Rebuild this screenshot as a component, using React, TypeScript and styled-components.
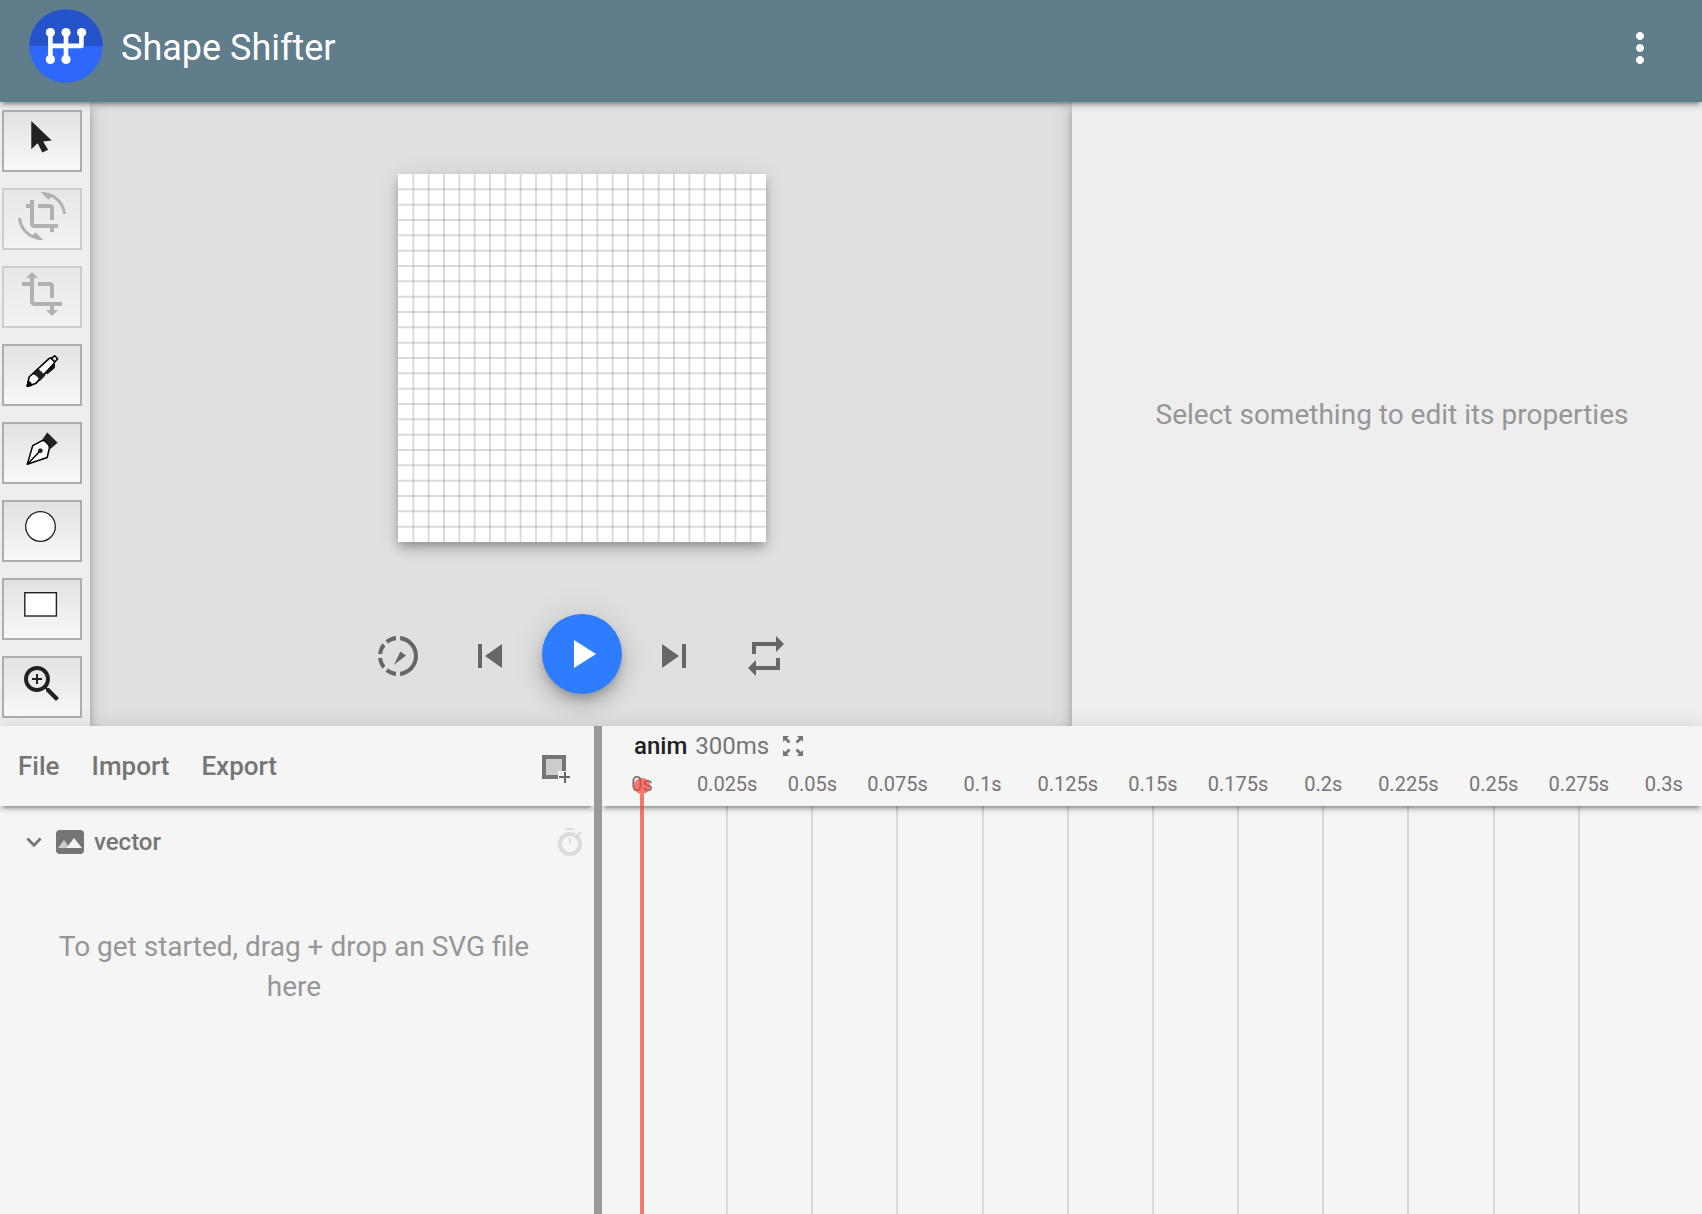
import React from 'react';
import styled, { createGlobalStyle, css } from 'styled-components';

const shadowLow =
  '0 6px 2px -4px rgba(0,0,0,.2), 0 4px 4px rgba(0,0,0,.14), 0 2px 10px rgba(0,0,0,.12)';
const shadowMid =
  '0 4px 8px -2px rgba(0,0,0,.2), 0 8px 10px rgba(0,0,0,.14), 0 2px 20px rgba(0,0,0,.12)';
const shadowHigh =
  '0 6px 10px -2px rgba(0,0,0,.2), 0 12px 20px rgba(0,0,0,.14), 0 2px 36px rgba(0,0,0,.12)';

const GlobalStyle = createGlobalStyle`
  *, *::before, *::after { box-sizing: border-box; }
  body { margin: 0; font-family: Roboto, "Liberation Sans", sans-serif; background: #f5f5f5; }
  button { font: inherit; color: inherit; border: 0; padding: 0; margin: 0; background: none; cursor: pointer; }
  svg { display: block; }
`;

const Page = styled.div`
  min-height: 100vh;
  display: flex;
  flex-direction: column;
`;

const Header = styled.header`
  position: relative;
  z-index: 3;
  display: flex;
  align-items: center;
  gap: 18px;
  height: 102px;
  padding: 0 38px 10px 29px;
  background: #607d8b;
  color: #fff;
  box-shadow: ${shadowLow};
`;

const Title = styled.h1`
  flex: 1;
  margin: 0;
  padding-top: 4px;
  font-size: 36px;
  font-weight: 400;
  line-height: 40px;
`;

const IconButton = styled.button`
  display: flex;
  align-items: center;
  justify-content: center;
`;

const MoreButton = styled(IconButton)`
  padding-top: 4px;
`;

const Upper = styled.div`
  display: flex;
`;

const Tools = styled.nav`
  position: relative;
  z-index: 2;
  flex: 0 0 90px;
  display: flex;
  flex-direction: column;
  gap: 16px;
  padding: 8px 8px 8px 2px;
  background: #eee;
  box-shadow: ${shadowMid};
`;

const ToolButton = styled.button`
  display: flex;
  justify-content: center;
  height: 62px;
  padding-top: 2px;
  border: 2px solid #adadad;
  background: linear-gradient(#e2e2e2, #f8f8f8);
  color: #212121;
  &:disabled {
    opacity: 0.5;
    color: #757575;
    cursor: default;
  }
`;

const Workspace = styled.main`
  flex: 1;
  display: flex;
  flex-direction: column;
  padding-left: 2px;
  background: #e0e0e0;
`;

const Stage = styled.div`
  flex: 1 1 0;
  min-height: 0;
  display: flex;
  justify-content: center;
  padding: 72px;
`;

const Artboard = styled.div`
  aspect-ratio: 1;
  background: #fff;
  box-shadow: ${shadowMid};
`;

const Playback = styled.div`
  display: flex;
  justify-content: center;
  gap: 12px;
  padding-bottom: 32px;
  color: #666;
`;

const PlaybackButton = styled(IconButton)<{ $primary?: boolean }>`
  width: 80px;
  height: 80px;
  padding-top: 4px;
  border-radius: 50%;
  ${(p) =>
    p.$primary &&
    css`
      padding-top: 0;
      background: #2e7dff;
      color: #fff;
      box-shadow: ${shadowHigh};
    `}
`;

const Properties = styled.aside`
  position: relative;
  z-index: 2;
  flex: 0 0 630px;
  display: flex;
  align-items: center;
  justify-content: center;
  padding: 2px 0 0 10px;
  background: #eee;
  box-shadow: ${shadowMid};
`;

const Hint = styled.p`
  margin: 0;
  font-size: 28px;
  line-height: 40px;
  text-align: center;
  color: #969696;
`;

const Lower = styled.div`
  position: relative;
  z-index: 4;
  flex: 1;
  display: flex;
  background: #f5f5f5;
  box-shadow: ${shadowMid};
`;

const Layers = styled.section`
  flex: 0 0 594px;
  overflow: hidden;
`;

const LayersHeader = styled.div`
  display: flex;
  align-items: center;
  gap: 32px;
  height: 80px;
  padding: 0 20px 0 18px;
  color: #757575;
  box-shadow: ${shadowLow};
`;

const MenuButton = styled.button`
  font-size: 26px;
  font-weight: 500;
  line-height: 32px;
`;

const AddButton = styled(IconButton)`
  margin-left: auto;
  padding-top: 6px;
`;

const LayerRow = styled.div`
  display: flex;
  align-items: center;
  height: 72px;
  padding: 0 12px 0 26px;
  color: #757575;
`;

const LayerName = styled.span`
  flex: 1;
  margin-left: 10px;
  font-size: 24px;
  font-weight: 500;
  line-height: 32px;
`;

const LayerIcon = styled.span`
  margin-left: 14px;
`;

const DropHint = styled(Hint)`
  padding: 49px 50px 0 44px;
`;

const Splitter = styled.div`
  flex: 0 0 8px;
  background: #999;
`;

const Timeline = styled.section`
  flex: 1;
  display: flex;
  flex-direction: column;
  position: relative;
  overflow: hidden;
`;

const TimelineHeader = styled.div`
  position: relative;
  z-index: 1;
  height: 80px;
  color: #757575;
  background: #f5f5f5;
  box-shadow: ${shadowLow};
`;

const AnimationInfo = styled.div`
  display: flex;
  align-items: center;
  gap: 8px;
  height: 40px;
  padding-left: 32px;
  font-size: 24px;
  line-height: 32px;
`;

const AnimationName = styled.span`
  font-weight: 500;
  color: #212121;
`;

const FitButton = styled(IconButton)`
  margin-left: 6px;
`;

const Ruler = styled.div`
  display: flex;
  justify-content: space-between;
  height: 36px;
  align-items: center;
  padding: 0 38px 0 40px;
  font-size: 20px;
  line-height: 24px;
`;

const Tick = styled.span`
  width: 0;
  display: flex;
  justify-content: center;
  white-space: nowrap;
`;

const Tracks = styled.div`
  flex: 1;
  display: grid;
  grid-template-columns: repeat(12, 1fr);
  margin: 0 37px 0 41px;
`;

const Track = styled.div`
  border-right: 2px solid #d8d8d8;
  &:last-child {
    border-right: 0;
  }
`;

const Playhead = styled.div`
  position: absolute;
  z-index: 2;
  top: 52px;
  bottom: 0;
  left: 32px;
  width: 16px;
  display: flex;
  flex-direction: column;
  align-items: center;
  opacity: 0.7;
  &::before {
    content: '';
    width: 16px;
    height: 16px;
    border-radius: 50%;
    background: #f44336;
  }
  &::after {
    content: '';
    flex: 1;
    width: 4px;
    background: #f44336;
  }
`;

type GlyphProps = { d: string };

const Glyph = ({ d }: GlyphProps) => (
  <svg width="48" height="48" viewBox="0 0 24 24" fill="currentColor" aria-hidden="true">
    <path d={d} />
  </svg>
);

const Logo = () => (
  <svg width="74" height="74" viewBox="0 0 74 74" aria-hidden="true">
    <circle cx="37" cy="37" r="36.8" fill="#2e68fb" />
    <path d="M.2 37a36.8 36.8 0 0 1 73.6 0z" fill="#2553c9" />
    <g stroke="#fff" strokeWidth="4.6" fill="none" strokeLinejoin="round">
      <path d="M21.4 23.5v27M37 23.5v27M21.4 36.9h31V23.5" />
    </g>
    <g fill="#fff">
      <circle cx="21.4" cy="23.5" r="4.6" />
      <circle cx="37" cy="23.5" r="4.6" />
      <circle cx="52.6" cy="23.5" r="4.6" />
      <circle cx="21.4" cy="50.4" r="4.6" />
      <circle cx="37" cy="50.4" r="4.6" />
    </g>
  </svg>
);

const toolArt = (children: React.ReactNode) => (
  <svg width="48" height="48" viewBox="0 0 48 48" aria-hidden="true">
    {children}
  </svg>
);

const tools: { name: string; disabled?: boolean; art: React.ReactNode }[] = [
  {
    name: 'Select',
    art: toolArt(<path d="M13.3 7v28.2l6.4-5.9 4.6 9.2 5.8-2.8-5-8.3 8.6-.8z" fill="#212121" />),
  },
  {
    name: 'Rotate',
    disabled: true,
    art: (
      <Glyph d="M7.47 21.49C4.2 19.93 1.86 16.76 1.5 13H0c.51 6.16 5.66 11 11.95 11 .23 0 .44-.02.66-.03L8.8 20.15l-1.33 1.34zM12.05 0c-.23 0-.44.02-.66.04l3.81 3.81 1.33-1.33C19.8 4.07 22.14 7.24 22.5 11H24c-.51-6.16-5.66-11-11.95-11zM16 14h2V8c0-1.11-.9-2-2-2h-6v2h6v6zm-8 2V4H6v2H4v2h2v8c0 1.1.89 2 2 2h8v2h2v-2h2v-2H8z" />
    ),
  },
  {
    name: 'Transform',
    disabled: true,
    art: (
      <Glyph d="M22 18v-2H8V4h2L7 1 4 4h2v2H2v2h4v8c0 1.1.9 2 2 2h8v2h-2l3 3 3-3h-2v-2h4zM10 8h6v6h2V8c0-1.1-.9-2-2-2h-6v2z" />
    ),
  },
  {
    name: 'Pencil',
    art: toolArt(
      <g stroke="#000" strokeWidth="1.6" strokeLinejoin="round">
        <path d="M28 24.6l1.4 1.2 6.8-5.8.4-3.4-2-1z" fill="#212121" strokeWidth="1" />
        <path d="M9.3 38.2l1.8-9.2L31 10.6q1.6-1.2 3 0l2 2.2q1.2 1.4 0 2.8L17.6 35.6z" fill="#fff" />
        <path d="M33.2 10.4l3.6-2.6 2.8 3-2.8 3.2z" fill="#fff" />
        <path d="M14.6 25.8l5.4-5 7 6.6-5.200 5.400c-1-3.400-3.600-6-7.200-7z" fill="#212121" strokeWidth=".6" />
        <path d="M9.3 38.2l.8-4.6c1.6.6 3 2 3.6 3.6z" fill="#000" />
      </g>,
    ),
  },
  {
    name: 'Pen',
    art: toolArt(
      <g stroke="#000" strokeWidth="1.5" strokeLinejoin="round">
        <path d="M29.3 6.7l10 10-7.3 6.3-7.7-9z" fill="#212121" strokeWidth=".4" />
        <path d="M9.3 38.2l5.4-18.6 9.4-4.9q1.6-.7 2.8.4l3.6 3.7q1.2 1.3.8 3.4l-2.1 9.3z" fill="#fff" />
        <path d="M9.3 38.2l13-13.5" />
        <circle cx="22.3" cy="24.7" r="2" fill="#212121" strokeWidth=".6" />
      </g>,
    ),
  },
  {
    name: 'Ellipse',
    art: toolArt(<circle cx="22.5" cy="22.5" r="14.8" fill="#fff" stroke="#212121" strokeWidth="1.3" />),
  },
  {
    name: 'Rectangle',
    art: toolArt(
      <rect x="6.8" y="10.7" width="31.6" height="23.3" fill="#fff" stroke="#212121" strokeWidth="1.4" />,
    ),
  },
  {
    name: 'Zoom',
    art: (
      <Glyph d="M15.5 14h-.79l-.28-.27C15.41 12.59 16 11.11 16 9.5 16 5.91 13.09 3 9.5 3S3 5.91 3 9.5 5.91 16 9.5 16c1.61 0 3.09-.59 4.23-1.57l.27.28v.79l5 4.99L20.49 19l-4.99-5zm-6 0C7.01 14 5 11.99 5 9.5S7.01 5 9.5 5 14 7.01 14 9.5 11.99 14 9.5 14zM12 10h-2v2H9v-2H7V9h2V7h1v2h2v1z" />
    ),
  },
];

const playback = [
  {
    name: 'Slow motion',
    d: 'M13.2 9.8L16 11.7L10 16.4zM11 4.07V2.05c-2.01.2-3.84 1-5.32 2.21L7.1 5.69c1.11-.86 2.44-1.44 3.9-1.62zM5.69 7.1L4.26 5.68C3.05 7.16 2.25 8.99 2.05 11h2.02c.18-1.46.76-2.79 1.62-3.9zM4.07 13H2.05c.2 2.01 1 3.84 2.21 5.32l1.43-1.43c-.86-1.1-1.44-2.43-1.62-3.89zm1.61 6.74C7.16 20.95 9 21.75 11 21.95v-2.02c-1.46-.18-2.79-.76-3.9-1.62l-1.42 1.43zM22 12c0 5.16-3.92 9.42-8.95 9.95v-2.02C16.97 19.41 20 16.05 20 12s-3.03-7.41-6.95-7.93V2.05C18.08 2.58 22 6.84 22 12z',
  },
  { name: 'Rewind', d: 'M6 6h2v12H6zm3.5 6l8.5 6V6z' },
  { name: 'Play', d: 'M8 5v14l11-7z', primary: true },
  { name: 'Fast forward', d: 'M6 18l8.5-6L6 6v12zM16 6v12h2V6h-2z' },
  { name: 'Repeat', d: 'M7 7h10v3l4-4-4-4v3H5v6h2V7zm10 10H7v-3l-4 4 4 4v-3h12v-6h-2v4z' },
];

const ticks = [
  '0s', '0.025s', '0.05s', '0.075s', '0.1s', '0.125s', '0.15s',
  '0.175s', '0.2s', '0.225s', '0.25s', '0.275s', '0.3s',
];

const gridSteps = Array.from({ length: 23 }, (_, i) => i + 1);

const PixelGrid = () => (
  <svg width="100%" height="100%" viewBox="0 0 24 24" aria-hidden="true">
    <g stroke="#000" strokeOpacity=".14" strokeWidth=".13">
      {gridSteps.map((n) => (
        <React.Fragment key={n}>
          <path d={`M${n} 0v24`} />
          <path d={`M0 ${n}h24`} />
        </React.Fragment>
      ))}
    </g>
  </svg>
);

export default function App() {
  return (
    <Page>
      <GlobalStyle />
      <Header>
        <Logo />
        <Title>Shape Shifter</Title>
        <MoreButton aria-label="More options">
          <Glyph d="M12 8c1.1 0 2-.9 2-2s-.9-2-2-2-2 .9-2 2 .9 2 2 2zm0 2c-1.1 0-2 .9-2 2s.9 2 2 2 2-.9 2-2-.9-2-2-2zm0 6c-1.1 0-2 .9-2 2s.9 2 2 2 2-.9 2-2-.9-2-2-2z" />
        </MoreButton>
      </Header>

      <Upper>
        <Tools aria-label="Tools">
          {tools.map((t) => (
            <ToolButton key={t.name} aria-label={t.name} disabled={t.disabled}>
              {t.art}
            </ToolButton>
          ))}
        </Tools>
        <Workspace>
          <Stage>
            <Artboard>
              <PixelGrid />
            </Artboard>
          </Stage>
          <Playback>
            {playback.map((b) => (
              <PlaybackButton key={b.name} aria-label={b.name} $primary={b.primary}>
                <Glyph d={b.d} />
              </PlaybackButton>
            ))}
          </Playback>
        </Workspace>
        <Properties>
          <Hint>Select something to edit its properties</Hint>
        </Properties>
      </Upper>

      <Lower>
        <Layers>
          <LayersHeader>
            <MenuButton>File</MenuButton>
            <MenuButton>Import</MenuButton>
            <MenuButton>Export</MenuButton>
            <AddButton aria-label="Add layer">
              <svg width="32" height="32" viewBox="0 0 32 32" aria-hidden="true">
                <path d="M4 6h16v12h-4v4H4z" fill="#ccc" />
                <path d="M0 2h24v16h-4V6H4v16h12v4H0z" fill="#757575" />
                <path d="M22 19h2v4h4v2h-4v5h-2v-5h-5v-2h5z" fill="#666" />
              </svg>
            </AddButton>
          </LayersHeader>
          <LayerRow>
            <IconButton aria-label="Collapse vector">
              <svg width="16" height="28" viewBox="0 0 16 28" aria-hidden="true">
                <path d="M1.4 10.6L8 17.2l6.6-6.6" fill="none" stroke="#757575" strokeWidth="2.8" />
              </svg>
            </IconButton>
            <LayerIcon>
              <svg width="28" height="24" viewBox="0 0 28 24" aria-hidden="true">
                <rect width="28" height="24" rx="4" fill="#757575" />
                <path d="M2 18l6-8 6 8z" fill="#ccc" />
                <path d="M10.5 18L18 8l8 10z" fill="#f5f5f5" />
              </svg>
            </LayerIcon>
            <LayerName>vector</LayerName>
            <IconButton aria-label="Animate vector">
              <svg width="24" height="28" viewBox="0 0 24 28" aria-hidden="true">
                <circle cx="12" cy="16" r="10" fill="none" stroke="#dcdcdc" strokeWidth="4" />
                <path d="M8 0h8v2H8zM11 10h2v6h-2zM18 7l4-4 2 2-4 4z" fill="#dcdcdc" />
              </svg>
            </IconButton>
          </LayerRow>
          <DropHint>To get started, drag + drop an SVG file here</DropHint>
        </Layers>
        <Splitter role="separator" />
        <Timeline>
          <TimelineHeader>
            <AnimationInfo>
              <AnimationName>anim</AnimationName>
              <span>300ms</span>
              <FitButton aria-label="Fit timeline">
                <svg width="20" height="20" viewBox="0 0 20 20" fill="#757575" aria-hidden="true">
                  <path d="M0 0h6L4 2l3.500 3.500-2 2L2 4 0 6zM20 0v6l-2-2-3.500 3.500-2-2L16 2l-2-2zM0 20v-6l2 2 3.500-3.500 2 2L4 18l2 2zM20 20h-6l2-2-3.500-3.500 2-2L18 16l2-2z" />
                </svg>
              </FitButton>
            </AnimationInfo>
            <Ruler>
              {ticks.map((t) => (
                <Tick key={t}>{t}</Tick>
              ))}
            </Ruler>
          </TimelineHeader>
          <Tracks>
            {ticks.slice(1).map((t) => (
              <Track key={t} />
            ))}
          </Tracks>
          <Playhead />
        </Timeline>
      </Lower>
    </Page>
  );
}
